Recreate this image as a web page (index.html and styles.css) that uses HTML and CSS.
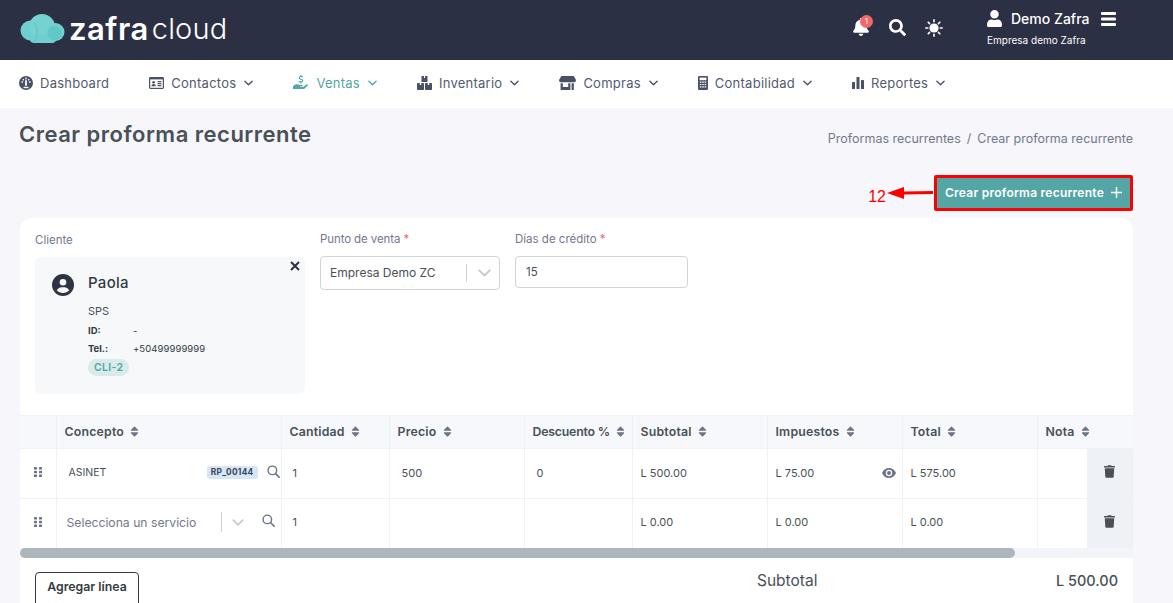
FILE: index.html
```html
<!DOCTYPE html>
<html lang="es">
<head>
<meta charset="utf-8">
<title>Crear proforma recurrente</title>
<link rel="stylesheet" href="styles.css">
</head>
<body>
<svg class="defs" width="0" height="0">
  <symbol id="i-sort" viewBox="0 0 320 512"><path d="M41 288h238c21.4 0 32.1 25.9 17 41L177 448c-9.4 9.4-24.6 9.4-33.9 0L24 329c-15.1-15.1-4.4-41 17-41zm255-105L177 64c-9.4-9.4-24.6-9.4-33.9 0L24 183c-15.1 15.1-4.4 41 17 41h238c21.4 0 32.1-25.9 17-41z"/></symbol>
  <symbol id="i-search" viewBox="0 0 512 512"><path d="M505 442.7L405.3 343c-4.5-4.5-10.6-7-17-7H372c27.6-35.3 44-79.7 44-128C416 93.1 322.9 0 208 0S0 93.1 0 208s93.1 208 208 208c48.3 0 92.7-16.4 128-44v16.3c0 6.4 2.5 12.5 7 17l99.7 99.7c9.4 9.4 24.6 9.4 33.9 0l28.3-28.3c9.4-9.4 9.4-24.6.1-34zM208 336c-70.7 0-128-57.2-128-128 0-70.7 57.2-128 128-128 70.7 0 128 57.2 128 128 0 70.7-57.2 128-128 128z"/></symbol>
  <symbol id="i-search-thin" viewBox="0 0 14 14"><circle cx="5.8" cy="5.8" r="4.6" fill="none" stroke="currentColor" stroke-width="1.5"/><path d="M9.2 9.2l4 4" stroke="currentColor" stroke-width="1.8" stroke-linecap="round"/></symbol>
  <symbol id="i-trash" viewBox="0 0 448 512"><path d="M432 32H312l-9.4-18.7A24 24 0 0 0 281.1 0H166.8a23.72 23.72 0 0 0-21.4 13.3L136 32H16A16 16 0 0 0 0 48v32a16 16 0 0 0 16 16h416a16 16 0 0 0 16-16V48a16 16 0 0 0-16-16zM53.2 467a48 48 0 0 0 47.9 45h245.8a48 48 0 0 0 47.9-45L416 128H32z"/></symbol>
  <symbol id="i-grip" viewBox="0 0 8 10"><rect x="0" y="0" width="3" height="2.6" rx=".6"/><rect x="5" y="0" width="3" height="2.6" rx=".6"/><rect x="0" y="3.7" width="3" height="2.6" rx=".6"/><rect x="5" y="3.7" width="3" height="2.6" rx=".6"/><rect x="0" y="7.4" width="3" height="2.6" rx=".6"/><rect x="5" y="7.4" width="3" height="2.6" rx=".6"/></symbol>
  <symbol id="i-chev" viewBox="0 0 10 6"><path d="M1 1l4 4 4-4" fill="none" stroke="currentColor" stroke-width="1.5" stroke-linecap="round" stroke-linejoin="round"/></symbol>
</svg>

<header class="topbar">
  <div class="logo">
    <svg class="logo-cloud" width="45" height="29" viewBox="0 0 45 29">
      <circle cx="10.500" cy="16.500" r="10" fill="#6fd0cf"/>
      <circle cx="22" cy="13" r="13" fill="#75d2d0"/>
      <circle cx="35.500" cy="18" r="9" fill="#6fd0cf"/>
      <rect x="10" y="20" width="26" height="9" rx="4" fill="#6fd0cf"/>
      <path d="M14 8c4 6 4 14 0 20" fill="none" stroke="#5fc4c4" stroke-width="1"/>
      <circle cx="34.500" cy="19" r="7" fill="#62c7c7"/>
    </svg>
    <span class="logo-zafra">zafra</span><span class="logo-cloudtext">cloud</span>
  </div>
  <div class="top-actions">
    <span class="bell">
      <svg width="16" height="18" viewBox="0 0 448 512" fill="#fff"><path d="M224 512c35.32 0 63.97-28.65 63.97-64H160.03c0 35.35 28.65 64 63.97 64zm215.39-149.71c-19.32-20.76-55.47-51.99-55.47-154.29 0-77.7-54.48-139.9-127.94-155.16V32c0-17.67-14.32-32-31.98-32s-31.98 14.33-31.98 32v20.84C118.56 68.1 64.08 130.3 64.08 208c0 102.3-36.15 133.53-55.47 154.29-6 6.45-8.66 14.16-8.61 21.71.11 16.4 12.98 32 32.1 32h383.8c19.12 0 32-15.6 32.1-32 .05-7.55-2.61-15.27-8.61-21.71z"/></svg>
      <span class="badge">1</span>
    </span>
    <svg class="ic-white" width="17" height="17"><use href="#i-search"/></svg>
    <svg class="sun" width="18" height="18" viewBox="0 0 18 18"><circle cx="9" cy="9" r="4.6" fill="#fff"/><path d="M9 .8v2M9 15.2v2M.8 9h2M15.2 9h2M3.2 3.2l1.4 1.4M13.4 13.4l1.4 1.4M3.2 14.8l1.4-1.4M13.4 4.6l1.4-1.4" stroke="#fff" stroke-width="1.6" stroke-linecap="round"/></svg>
    <div class="user">
      <div class="user-line">
        <svg class="ic-white" width="15" height="17" viewBox="0 0 448 512"><path d="M224 256c70.7 0 128-57.3 128-128S294.7 0 224 0 96 57.3 96 128s57.3 128 128 128zm89.6 32h-16.7c-22.2 10.2-46.9 16-72.9 16s-50.6-5.8-72.9-16h-16.7C60.2 288 0 348.2 0 422.4V464c0 26.5 21.5 48 48 48h352c26.5 0 48-21.5 48-48v-41.6c0-74.2-60.2-134.4-134.4-134.4z"/></svg>
        <span class="user-name">Demo Zafra</span>
        <svg class="ic-white" width="15" height="14" viewBox="0 0 15 14"><rect y="0" width="15" height="3" rx="1"/><rect y="5.500" width="15" height="3" rx="1"/><rect y="11" width="15" height="3" rx="1"/></svg>
      </div>
      <div class="user-company">Empresa demo Zafra</div>
    </div>
  </div>
</header>

<nav class="mainnav">
  <a class="nav-item">
    <svg width="14" height="14" viewBox="0 0 14 14"><circle cx="7" cy="7" r="7" fill="#4a5066"/><path d="M7 1.500v2M2.500 6h1.500M10 6h1.500M3.800 3.300l1 1M10.200 3.300l-1 1" stroke="#fff" stroke-width="1.300"/><path d="M7 5l0 4" stroke="#fff" stroke-width="1.800" stroke-linecap="round"/><path d="M4.500 11.500h5" stroke="#fff" stroke-width="1.400"/></svg>
    <span>Dashboard</span>
  </a>
  <a class="nav-item">
    <svg width="15" height="12" viewBox="0 0 15 12"><rect width="15" height="12" rx="1.400" fill="#4a5066"/><rect x="1.200" y="2.400" width="12.600" height="8.400" fill="#fff"/><circle cx="4.600" cy="5.200" r="1.300" fill="#4a5066"/><path d="M2.400 9.200c0-3 4.400-3 4.400 0z" fill="#4a5066"/><path d="M8.600 4.600h3.800M8.600 6.600h3.800M8.600 8.600h3.800" stroke="#4a5066" stroke-width="1.100"/></svg>
    <span>Contactos</span>
    <svg class="chev" width="9" height="6"><use href="#i-chev"/></svg>
  </a>
  <a class="nav-item nav-active">
    <svg width="16" height="15" viewBox="0 0 16 15" fill="#54a5a5"><path d="M0 11.500c1-1.300 2.300-2.200 3.800-2.200 1.300 0 2 .7 3.200.7h2c1 0 1 1.500 0 1.500H7c-.3 0-.3.4 0 .4h2.600c.6 0 .9-.2 1.300-.5l2.800-2.100c.9-.6 1.800.5 1 1.300l-3 2.800c-.5.4-1 .6-1.700.6H0z"/><path d="M7.900 0v1M7.900 7.400v1M9.800 2.200C9.400 1.400 6.200 1 6.200 2.800c0 1.900 3.500 1 3.500 2.800 0 1.800-3.400 1.400-3.700.5" fill="none" stroke="#54a5a5" stroke-width="1.200"/></svg>
    <span>Ventas</span>
    <svg class="chev" width="9" height="6"><use href="#i-chev"/></svg>
  </a>
  <a class="nav-item">
    <svg width="15" height="14" viewBox="0 0 15 14" fill="#4a5066"><rect x="4.500" y="0" width="6" height="6" rx=".5"/><rect x="0" y="7" width="7" height="7" rx=".7"/><rect x="8" y="7" width="7" height="7" rx=".7"/><path d="M7 0h1v2H7zM2.800 7h1.400v2H2.800zM10.800 7h1.400v2h-1.400z" fill="#fff"/></svg>
    <span>Inventario</span>
    <svg class="chev" width="9" height="6"><use href="#i-chev"/></svg>
  </a>
  <a class="nav-item">
    <svg width="17" height="14" viewBox="0 0 17 14" fill="#4a5066"><path d="M2.300 0h12.400L17 4c0 1.400-1 2.300-2.100 2.300H2.100C1 6.300 0 5.400 0 4z"/><path d="M1.600 7.300h2.200v3.600h5.400V7.300h2.200V14H1.600zM12.600 7.300h2.200V14h-2.200z"/></svg>
    <span>Compras</span>
    <svg class="chev" width="9" height="6"><use href="#i-chev"/></svg>
  </a>
  <a class="nav-item">
    <svg width="10" height="14" viewBox="0 0 10 14"><rect width="10" height="14" rx="1.200" fill="#4a5066"/><rect x="1.600" y="1.600" width="6.800" height="2.600" fill="#fff"/><path d="M1.800 6.200h1.600M4.200 6.200h1.600M6.600 6.200h1.600M1.800 8.500h1.600M4.200 8.500h1.600M6.600 8.500h1.600M1.800 10.800h1.600M4.200 10.800h1.600M6.600 10.800h1.600" stroke="#fff" stroke-width="1.200"/></svg>
    <span>Contabilidad</span>
    <svg class="chev" width="9" height="6"><use href="#i-chev"/></svg>
  </a>
  <a class="nav-item">
    <svg width="12" height="12" viewBox="0 0 12 12" fill="#4a5066"><rect x="0" y="5" width="3" height="7" rx=".6"/><rect x="4.500" y="0" width="3" height="12" rx=".6"/><rect x="9" y="3" width="3" height="9" rx=".6"/></svg>
    <span>Reportes</span>
    <svg class="chev" width="9" height="6"><use href="#i-chev"/></svg>
  </a>
</nav>

<main class="page">
  <div class="title-row">
    <h1 class="page-title">Crear proforma recurrente</h1>
    <div class="crumbs"><span>Proformas recurrentes</span><span class="sep">/</span><span>Crear proforma recurrente</span></div>
  </div>

  <div class="actions-row">
    <button class="btn-primary">Crear proforma recurrente
      <svg width="11" height="11" viewBox="0 0 11 11"><path d="M5.500 0v11M0 5.500h11" stroke="#fff" stroke-width="1.500"/></svg>
    </button>
    <div class="callout">
      <span class="callout-num">12</span>
      <svg class="callout-arrow" width="46" height="14" viewBox="0 0 46 14"><path d="M0 7L17 1v4.600L46 5v3L17 8.600V13z" fill="#f00"/></svg>
      <span class="callout-box"></span>
    </div>
  </div>

  <section class="card">
    <div class="form-row">
      <div class="field field-client">
        <label class="label">Cliente</label>
        <div class="client-box">
          <svg class="client-close" width="10" height="10" viewBox="0 0 10 10"><path d="M1 1l8 8M9 1l-8 8" stroke="#2b3044" stroke-width="2"/></svg>
          <svg class="client-avatar" width="22" height="22" viewBox="0 0 22 22"><circle cx="11" cy="11" r="11" fill="#2f3342"/><circle cx="11" cy="8.200" r="3.300" fill="#f6f8fa"/><path d="M4.800 16.200c1.400-2.600 3.800-3 6.200-3s4.800.4 6.200 3c-1.500 1.800-3.800 2.800-6.200 2.800s-4.700-1-6.200-2.800z" fill="#f6f8fa"/></svg>
          <div class="client-info">
            <div class="client-name">Paola</div>
            <div class="client-city">SPS</div>
            <div class="client-meta"><b>ID:</b><span>-</span></div>
            <div class="client-meta"><b>Tel.:</b><span>+50499999999</span></div>
            <span class="client-tag">CLI-2</span>
          </div>
        </div>
      </div>
      <div class="field field-pos">
        <label class="label label-up">Punto de venta <i>*</i></label>
        <div class="select">
          <span>Empresa Demo ZC</span>
          <span class="select-sep"></span>
          <svg class="select-chev" width="13" height="8"><use href="#i-chev"/></svg>
        </div>
      </div>
      <div class="field field-days">
        <label class="label label-up">Días de crédito <i>*</i></label>
        <div class="input">15</div>
      </div>
    </div>

    <div class="table-wrap">
      <table class="lines">
        <colgroup>
          <col class="c-grip"><col class="c-concept"><col class="c-qty"><col class="c-price"><col class="c-disc"><col class="c-money"><col class="c-money"><col class="c-money"><col class="c-note"><col class="c-act">
        </colgroup>
        <thead>
          <tr>
            <th></th>
            <th>Concepto <svg class="sort"><use href="#i-sort"/></svg></th>
            <th>Cantidad <svg class="sort"><use href="#i-sort"/></svg></th>
            <th>Precio <svg class="sort"><use href="#i-sort"/></svg></th>
            <th class="th-disc">Descuento % <svg class="sort"><use href="#i-sort"/></svg></th>
            <th>Subtotal <svg class="sort"><use href="#i-sort"/></svg></th>
            <th>Impuestos <svg class="sort"><use href="#i-sort"/></svg></th>
            <th>Total <svg class="sort"><use href="#i-sort"/></svg></th>
            <th colspan="2" class="th-note">Nota <svg class="sort"><use href="#i-sort"/></svg></th>
          </tr>
        </thead>
        <tbody>
          <tr class="row-a">
            <td class="td-grip"><svg class="grip"><use href="#i-grip"/></svg></td>
            <td class="td-concept">
              <div class="concept">
                <span class="concept-name">ASINET</span>
                <span class="code">RP_00144</span>
                <svg class="ic-search"><use href="#i-search-thin"/></svg>
              </div>
            </td>
            <td class="td-qty">1</td>
            <td class="td-input">500</td>
            <td class="td-input">0</td>
            <td>L 500.00</td>
            <td>
              <div class="tax">L 75.00
                <svg class="eye" width="14" height="10" viewBox="0 0 14 10"><path d="M7 0C3.800 0 1.200 2 0 5c1.200 3 3.800 5 7 5s5.800-2 7-5c-1.200-3-3.800-5-7-5z" fill="#6d7388"/><circle cx="7" cy="5" r="3.200" fill="#fff"/><circle cx="7" cy="5" r="2" fill="#6d7388"/></svg>
              </div>
            </td>
            <td>L 575.00</td>
            <td class="td-note"></td>
            <td class="td-act"><svg class="trash"><use href="#i-trash"/></svg></td>
          </tr>
          <tr class="row-b">
            <td class="td-grip"><svg class="grip"><use href="#i-grip"/></svg></td>
            <td class="td-concept">
              <div class="concept concept-empty">
                <span class="placeholder">Selecciona un servicio</span>
                <span class="select-sep sep-tall"></span>
                <svg class="select-chev chev-sm" width="12" height="7"><use href="#i-chev"/></svg>
                <svg class="ic-search"><use href="#i-search-thin"/></svg>
              </div>
            </td>
            <td class="td-qty">1</td>
            <td></td>
            <td></td>
            <td>L 0.00</td>
            <td>L 0.00</td>
            <td>L 0.00</td>
            <td class="td-note"></td>
            <td class="td-act"><svg class="trash"><use href="#i-trash"/></svg></td>
          </tr>
        </tbody>
      </table>
      <div class="scroll-track"><div class="scroll-thumb"></div></div>
    </div>

    <div class="card-foot">
      <button class="btn-outline">Agregar línea</button>
      <div class="totals"><span class="tot-label">Subtotal</span><span class="tot-value">L 500.00</span></div>
    </div>
  </section>
</main>
</body>
</html>
```

FILE: styles.css
```css
* { box-sizing: border-box; }
html, body { height: 603px; overflow: hidden; }
body {
  margin: 0;
  background: #f6f6fb;
  color: #495057;
  font-family: Inter, "Noto Sans", "Liberation Sans", sans-serif;
  font-size: 12px;
}
.defs { display: block; height: 0; }

/* top bar */
.topbar {
  height: 60px;
  background: #2b3044;
  display: flex;
  justify-content: space-between;
  padding: 0 56px 0 20px;
}
.logo { display: flex; align-items: center; color: #fff; }
.logo-cloud { margin: 0 4px 3px 0; }
.logo-zafra { font-size: 31px; font-weight: 600; letter-spacing: .5px; padding-bottom: 4px; }
.logo-cloudtext { font-size: 29px; font-weight: 300; margin-left: 3px; letter-spacing: .2px; padding-bottom: 4px; }
.top-actions { display: flex; align-items: flex-start; }
.ic-white { fill: #fff; display: block; }
.bell { position: relative; display: block; margin: 18px 20px 0 0; }
.bell svg { display: block; }
.badge {
  position: absolute;
  top: -3px; left: 7px;
  width: 13px; height: 13px;
  border-radius: 50%;
  background: #f06868;
  color: #fff;
  font-size: 8px;
  line-height: 13px;
  text-align: center;
}
.top-actions > .ic-white { margin: 19px 19px 0 0; }
.sun { display: block; margin: 19px 44px 0 0; }
.user { padding-top: 10px; width: 130px; }
.user-line { display: flex; align-items: center; color: #fff; }
.user-name { font-size: 14px; font-weight: 500; margin: 0 12px 0 9px; }
.user-company { color: #fff; font-size: 10px; margin-top: 7px; }

/* nav */
.mainnav {
  height: 48px;
  background: #fff;
  display: flex;
  align-items: center;
  gap: 40px;
  padding: 0 0 3px 19px;
}
.nav-item { display: flex; align-items: center; gap: 7px; color: #545a6e; font-size: 13px; letter-spacing: .25px; }
.nav-item svg { display: block; }
.chev { margin-left: 1px; color: #4a5066; }
.nav-active { color: #54a5a5; }
.nav-active .chev { color: #54a5a5; }

/* page */
.page { padding: 0 40px 0 20px; }
.title-row { display: flex; justify-content: space-between; align-items: flex-start; height: 67px; }
.page-title { margin: 12px 0 0 -1px; font-size: 22px; line-height: 28px; font-weight: 600; letter-spacing: .5px; color: #495057; }
.crumbs { display: flex; gap: 6px; margin-top: 23px; font-size: 12.500px; line-height: 16px; color: #74788d; }
.actions-row { display: flex; justify-content: flex-end; padding-right: 2px; height: 43px; }
.btn-primary {
  position: relative;
  display: flex;
  align-items: center;
  justify-content: center;
  gap: 7px;
  width: 195px;
  height: 32px;
  margin-top: 2px;
  background: #54a5a5;
  border: 0;
  color: #fff;
  font-family: inherit;
  font-size: 12px;
  font-weight: 600;
  letter-spacing: .25px;
  padding: 0 0 2px;
}
.callout { position: relative; }
.callout-num { position: absolute; right: 245px; top: 13px; color: #f00; font: 16px/18px "Liberation Sans", sans-serif; }
.callout-arrow { position: absolute; right: 198px; top: 11px; }
.callout-box { position: absolute; right: -2px; top: 0; width: 199px; height: 36px; border: 3px solid #f00; border-radius: 2px; }

/* card */
.card { background: #fff; border-radius: 12px 12px 0 0; height: 385px; overflow: hidden; }
.form-row { display: flex; height: 197px; padding: 15px 0 0 15px; }
.label { display: block; font-size: 11.500px; line-height: 14px; color: #74788d; }
.label i { color: #f46a6a; font-style: normal; }
.label-up { margin-top: -1px; }
.field-client { width: 285px; }
.client-box {
  position: relative;
  display: flex;
  width: 270px;
  height: 137px;
  margin-top: 10px;
  padding: 17px 0 0 17px;
  background: #f6f8fa;
  border-radius: 6px;
}
.client-close { position: absolute; right: 5px; top: 4px; }
.client-avatar { flex: none; margin-right: 14px; }
.client-name { font-size: 15px; line-height: 18px; color: #343a40; font-weight: 500; letter-spacing: .3px; }
.client-city { margin-top: 12px; font-size: 11px; line-height: 14px; color: #495057; }
.client-meta { display: flex; margin-top: 6px; font-size: 9.500px; line-height: 14px; color: #343a40; }
.client-meta b { width: 45px; font-weight: 700; }
.client-meta span { font-size: 9.500px; letter-spacing: .08px; }
.client-meta + .client-meta { margin-top: 4px; }
.client-tag {
  display: inline-block;
  margin-top: 3px;
  height: 17px;
  padding: 0 6px;
  border-radius: 9px;
  background: #d8eaea;
  color: #54a5a5;
  font-size: 10.500px;
  font-weight: 600;
  line-height: 18px;
  letter-spacing: .3px;
}
.field-pos { width: 195px; }
.field-pos .label { letter-spacing: -.1px; }
.field-days { width: 173px; }
.select {
  display: flex;
  align-items: center;
  width: 180px;
  height: 34px;
  margin-top: 10px;
  padding: 0 0 1px 9px;
  border: 1px solid #ced4da;
  border-radius: 4px;
  font-size: 12px;
  color: #495057;
}
.select > span:first-child { width: 136px; white-space: nowrap; }
.select-sep { display: block; width: 1px; height: 18px; background: #ced4da; }
.select-chev { display: block; margin-left: 11px; color: #c6c9ce; }
.input {
  width: 173px;
  height: 32px;
  margin-top: 10px;
  padding: 0 10px;
  border: 1px solid #ced4da;
  border-radius: 4px;
  font-size: 11.500px;
  line-height: 31px;
  color: #495057;
}

/* table */
.table-wrap { width: 100%; }
.lines { width: 1113px; table-layout: fixed; border-collapse: collapse; }
.c-grip { width: 36px; }
.c-concept { width: 225px; }
.c-qty { width: 108px; }
.c-price { width: 135px; }
.c-disc { width: 108px; }
.c-money { width: 135px; }
.c-note { width: 50px; }
.c-act { width: 46px; }
.lines th, .lines td { border: 1px solid #eff2f7; padding: 0 0 2px 8px; text-align: left; }
.lines th:first-child, .lines td:first-child { border-left: 0; }
.lines th:last-child, .lines td:last-child { border-right: 0; }
.lines tr:last-child td { border-bottom: 0; }
.lines th {
  height: 33px;
  background: #f6f8fb;
  font-size: 12.300px;
  font-weight: 600;
  letter-spacing: .2px;
  color: #495057;
  white-space: nowrap;
}
.lines .th-disc { letter-spacing: -.2px; }
.lines td { font-size: 11px; color: #495057; }
.row-a td { height: 50px; }
.row-b td { height: 49px; }
.sort { display: inline-block; width: 9px; height: 13px; margin-left: 3px; vertical-align: -2px; fill: #6d7388; }
.lines .td-grip { padding: 0; }
.grip { display: block; width: 8px; height: 10px; margin: -3px 0 0 14px; fill: #6d7388; }
.lines .td-concept { padding: 0 1px 2px 11px; }
.concept { display: flex; align-items: center; }
.concept-name { flex: 1; font-size: 10.500px; padding-left: 1px; }
.code {
  padding: 0 4px;
  height: 13px;
  border-radius: 3px;
  background: #d4e6f7;
  color: #3d4454;
  font-size: 8.300px;
  font-weight: 700;
  line-height: 13px;
  letter-spacing: .3px;
}
.ic-search { display: block; width: 13px; height: 13px; margin: -3px 0 0 9px; color: #6d7388; }
.concept-empty { margin-left: -1px; }
.placeholder { width: 155px; font-size: 12.200px; color: #74788d; white-space: nowrap; }
.sep-tall { height: 20px; }
.chev-sm { margin-left: 10px; margin-right: 18px; }
.concept-empty .ic-search { margin-left: 0; margin-right: 5px; }
.lines .td-qty { padding-left: 11px; }
.lines .td-input { padding-left: 12px; }
.tax { display: flex; align-items: center; justify-content: space-between; padding-right: 6px; }
.eye { display: block; }
.lines .td-note { border-right: 0; }
.lines .td-act { background: #eef1f6; border-left: 0; padding: 0; }
.trash { display: block; width: 11px; height: 13px; margin: -4px 0 0 17px; fill: #495057; }
.scroll-track { height: 10px; background: #f3f4f8; }
.scroll-thumb { width: 995px; height: 10px; background: #adb5bd; border-radius: 5px; }
.card-foot { display: flex; justify-content: space-between; padding: 14px 15px 0; }
.btn-outline {
  width: 104px;
  height: 36px;
  background: #fff;
  border: 1px solid #343a40;
  border-radius: 4px;
  color: #343a40;
  font-family: inherit;
  font-size: 12.300px;
  font-weight: 600;
  padding: 0 0 6px;
}
.totals { display: flex; width: 361px; justify-content: space-between; font-size: 15.500px; line-height: 18px; color: #495057; }
.tot-value { font-size: 14.500px; font-weight: 500; }
```
